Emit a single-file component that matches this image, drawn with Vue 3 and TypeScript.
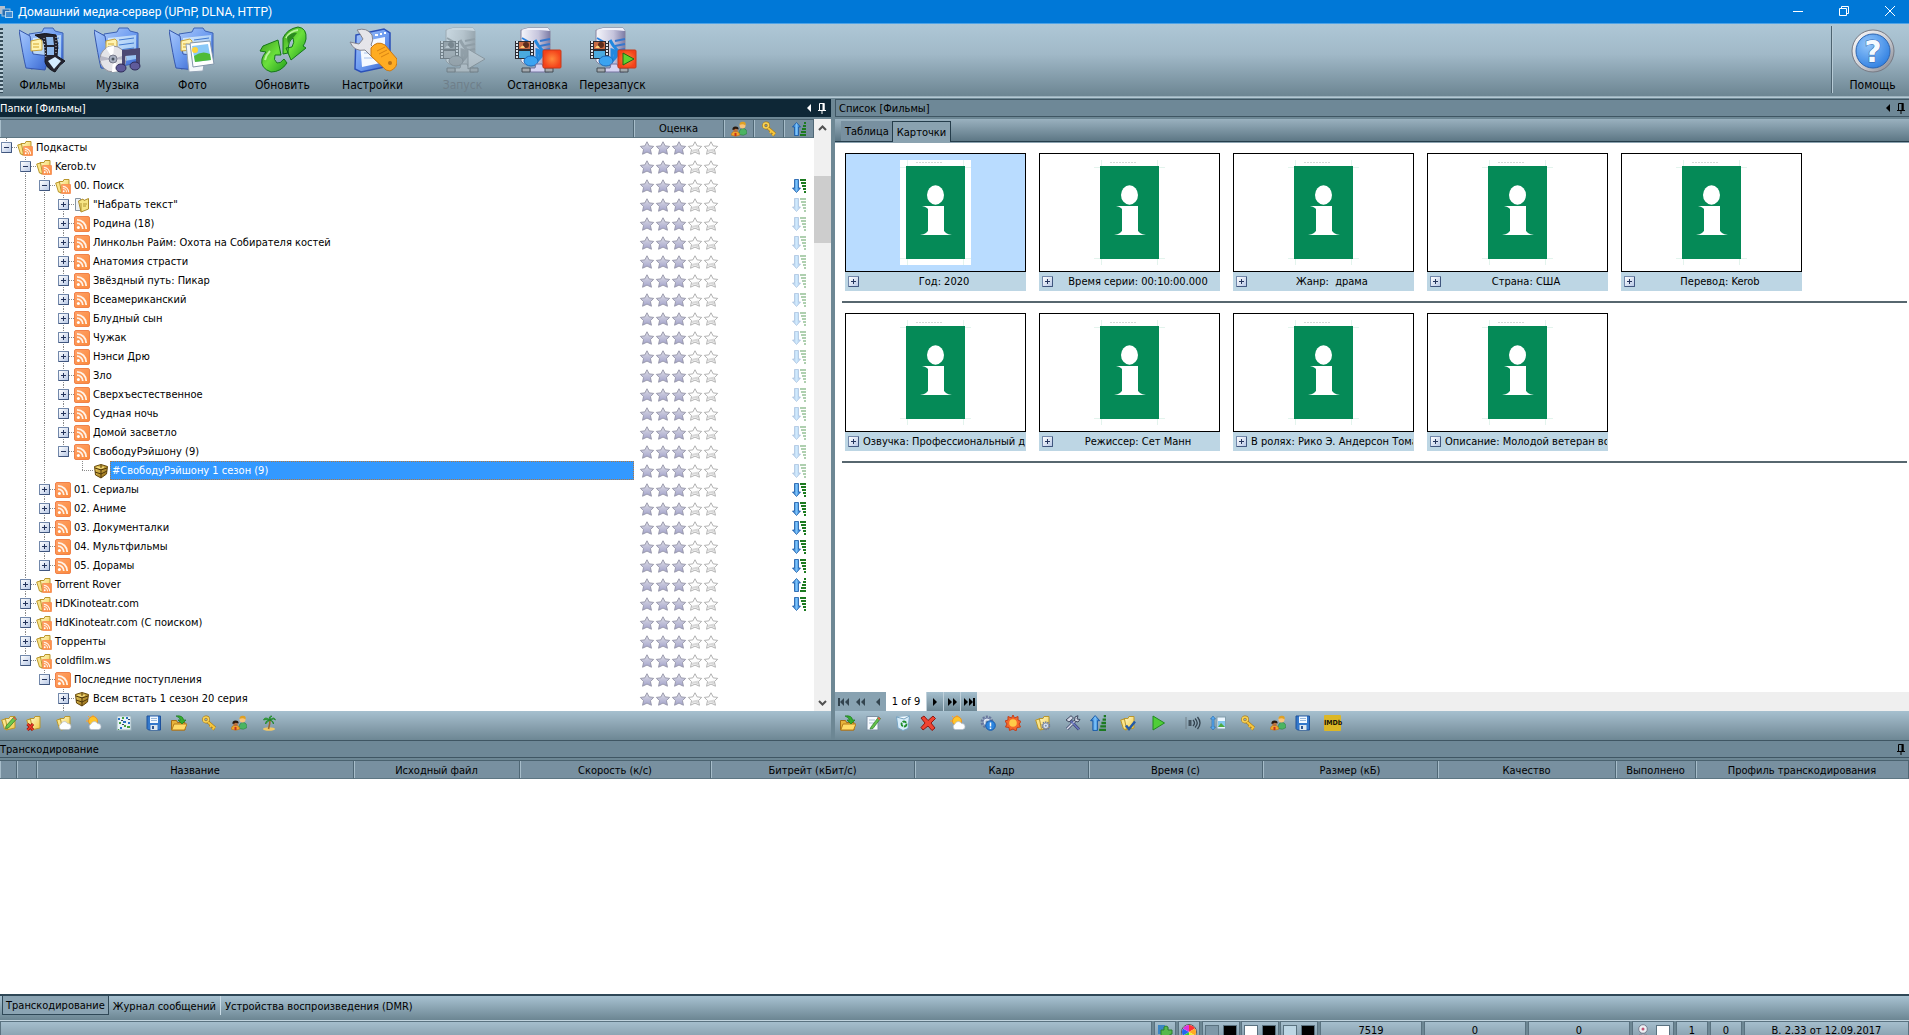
<script setup lang="ts">
import { computed, ref } from 'vue'

type Sort = '' | 'down' | 'faint' | 'up'
interface TreeRow {
  level: number
  icon: string
  label: string
  state: 'open' | 'closed' | 'leaf'
  sort: Sort
}

const row = (level: number, icon: string, label: string, state: TreeRow['state'] = 'closed', sort: Sort = ''): TreeRow =>
  ({ level, icon, label, state, sort })

const rows: TreeRow[] = [
  row(0, 'folder-rss', 'Подкасты', 'open'),
  row(1, 'folder-rss', 'Kerob.tv', 'open'),
  row(2, 'folder-rss', '00. Поиск', 'open', 'down'),
  row(3, 'folder-text', '"Набрать текст"', 'closed', 'faint'),
  row(3, 'rss', 'Родина (18)', 'closed', 'faint'),
  row(3, 'rss', 'Линкольн Райм: Охота на Собирателя костей', 'closed', 'faint'),
  row(3, 'rss', 'Анатомия страсти', 'closed', 'faint'),
  row(3, 'rss', 'Звёздный путь: Пикар', 'closed', 'faint'),
  row(3, 'rss', 'Всеамериканский', 'closed', 'faint'),
  row(3, 'rss', 'Блудный сын', 'closed', 'faint'),
  row(3, 'rss', 'Чужак', 'closed', 'faint'),
  row(3, 'rss', 'Нэнси Дрю', 'closed', 'faint'),
  row(3, 'rss', 'Зло', 'closed', 'faint'),
  row(3, 'rss', 'Сверхъестественное', 'closed', 'faint'),
  row(3, 'rss', 'Судная ночь', 'closed', 'faint'),
  row(3, 'rss', 'Домой засветло', 'closed', 'faint'),
  row(3, 'rss', 'СвободуРэйшону (9)', 'open', 'faint'),
  row(4, 'box', '#СвободуРэйшону 1 сезон (9)', 'leaf', 'faint'),
  row(2, 'rss', '01. Сериалы', 'closed', 'down'),
  row(2, 'rss', '02. Аниме', 'closed', 'down'),
  row(2, 'rss', '03. Документалки', 'closed', 'down'),
  row(2, 'rss', '04. Мультфильмы', 'closed', 'down'),
  row(2, 'rss', '05. Дорамы', 'closed', 'down'),
  row(1, 'folder-rss', 'Torrent Rover', 'closed', 'up'),
  row(1, 'folder-rss', 'HDKinoteatr.com', 'closed', 'down'),
  row(1, 'folder-rss', 'HdKinoteatr.com (С поиском)'),
  row(1, 'folder-rss', 'Торренты'),
  row(1, 'folder-rss', 'coldfilm.ws', 'open'),
  row(2, 'rss', 'Последние поступления', 'open'),
  row(3, 'box', 'Всем встать 1 сезон 20 серия'),
  row(3, 'box', ''),
]

const selected = ref(17)

// A branch line continues below a row when a later row sits on the same level
// before the tree returns to a shallower one.
const continues = (index: number, level: number): boolean => {
  for (let i = index + 1; i < rows.length; i++) {
    if (rows[i].level < level) return false
    if (rows[i].level === level) return true
  }
  return false
}

const tree = computed(() =>
  rows.map((r, i) => ({
    ...r,
    guides: Array.from({ length: r.level }, (_, l) => l > 0 && continues(i, l)),
    last: !continues(i, r.level),
  })),
)

const mainTools = [
  { icon: 'movies', label: 'Фильмы' },
  { icon: 'music', label: 'Музыка' },
  { icon: 'photo', label: 'Фото' },
  { icon: 'refresh', label: 'Обновить', gap: true },
  { icon: 'settings', label: 'Настройки', gap: true },
  { icon: 'start', label: 'Запуск', gap: true, disabled: true },
  { icon: 'stop', label: 'Остановка' },
  { icon: 'restart', label: 'Перезапуск' },
]

const folderTools = [['edit-folder', 'del-folder'], ['cloud-folder'], ['weather'], ['grid'], ['floppy', 'open'], ['key'], ['users'], ['palm']]
const listTools = [
  ['open', 'edit-page'], ['bin', 'cross'], ['weather'], ['gear-info', 'sun'], ['gear-folder'], ['tools', 'sort-up'],
  ['check-folder'], ['play'], [], ['sound', 'sort-image'], ['key'], ['users', 'floppy'],
]

const cards = [
  ['Год: 2020', 'Время серии: 00:10:00.000', 'Жанр:  драма', 'Страна: США', 'Перевод: Kerob'],
  ['Озвучка: Профессиональный дв', 'Режиссер: Сет Манн', 'В ролях: Рико Э. Андерсон Тома', 'Описание: Молодой ветеран во'],
]

const columns = [
  { label: '', width: 17 }, { label: '', width: 20 }, { label: 'Название', width: 317 },
  { label: 'Исходный файл', width: 166 }, { label: 'Скорость (к/с)', width: 191 },
  { label: 'Битрейт (кБит/с)', width: 204 }, { label: 'Кадр', width: 174 }, { label: 'Время (с)', width: 174 },
  { label: 'Размер (кБ)', width: 175 }, { label: 'Качество', width: 178 }, { label: 'Выполнено', width: 80 },
  { label: 'Профиль транскодирования', width: 213 },
]
</script>

<template>
  <div class="app">
    <svg class="sprite" aria-hidden="true">
      <defs>
        <linearGradient id="gBlue" x1="0" y1="0" x2="1" y2="1"><stop offset="0" stop-color="#a9c8fb" /><stop offset=".5" stop-color="#6f9df0" /><stop offset="1" stop-color="#3561cc" /></linearGradient>
        <linearGradient id="gPage" x1="0" y1="0" x2="1" y2="1"><stop offset="0" stop-color="#d8eafc" /><stop offset="1" stop-color="#8dbcf2" /></linearGradient>
        <linearGradient id="gGreen" x1="0" y1="0" x2="1" y2="1"><stop offset="0" stop-color="#3f9f20" /><stop offset=".5" stop-color="#6be03c" /><stop offset="1" stop-color="#1f9a1c" /></linearGradient>
        <linearGradient id="gOrange" x1="0" y1="0" x2="1" y2="1"><stop offset="0" stop-color="#ffa269" /><stop offset="1" stop-color="#fb8a3c" /></linearGradient>
        <linearGradient id="gYellow" x1="0" y1="0" x2="1" y2="1"><stop offset="0" stop-color="#fffbcf" /><stop offset="1" stop-color="#f0c63c" /></linearGradient>
        <linearGradient id="gServer" x1="0" y1="0" x2="1" y2="0"><stop offset="0" stop-color="#f6f6fb" /><stop offset=".6" stop-color="#c5c4dc" /><stop offset="1" stop-color="#7d7ca6" /></linearGradient>
        <linearGradient id="gStar" x1="0" y1="0" x2="0" y2="1"><stop offset="0" stop-color="#dedee6" /><stop offset="1" stop-color="#a3a3cb" /></linearGradient>
        <linearGradient id="gArrow" x1="0" y1="0" x2="1" y2="0"><stop offset="0" stop-color="#1c62b8" /><stop offset=".5" stop-color="#7cc4fb" /><stop offset="1" stop-color="#1d6cc8" /></linearGradient>
        <linearGradient id="gGold" x1="0" y1="0" x2="1" y2="1"><stop offset="0" stop-color="#f5d968" /><stop offset="1" stop-color="#8a5f0c" /></linearGradient>
        <linearGradient id="gRing" x1="0" y1="0" x2="1" y2="1"><stop offset="0" stop-color="#ffffff" /><stop offset=".6" stop-color="#c4c6cc" /><stop offset="1" stop-color="#7b7d88" /></linearGradient>
        <radialGradient id="gHelp" cx=".35" cy=".3" r=".8"><stop offset="0" stop-color="#92c6fb" /><stop offset="1" stop-color="#2b7ce0" /></radialGradient>
        <radialGradient id="gStop"><stop offset="0" stop-color="#ff8a3c" /><stop offset="1" stop-color="#f4421a" /></radialGradient>
      </defs>

      <symbol id="bigfolder" viewBox="0 0 48 48">
        <path d="M10 8 L23 6 L25 2 H34 L36 5 L44 7 V37 L12 43 Z" fill="url(#gBlue)" stroke="#3c62b4" />
        <path d="M14 12 L42 9 V33 L14 38 Z" fill="url(#gPage)" />
        <path d="M25 14 l15 -2 M25 19 l15 -2 M25 24 l15 -2" stroke="#3f78cf" fill="none" />
        <path d="M0 4 L11 10 L14 28 L30 30 L26 44 L7 42 Q4 30 0 4Z" fill="url(#gBlue)" stroke="#3657ac" />
        <path d="M12 15 l9 -2 2 2 v9 l-11 1z" fill="#fff3b0" stroke="#c8a33c" />
        <path d="M14 18 h6 M14 21 h6" stroke="#d3a72e" />
      </symbol>
      <symbol id="movies" viewBox="0 0 48 48">
        <use href="#bigfolder" />
        <path d="M16 9 Q26 6 37 9 Q40 20 38 30 L46 35 Q40 39 36 46 Q28 43 26 36 Q27 22 24 14 Z" fill="#24242f" stroke="#15151c" />
        <path d="M27 11 h7 l1 8 h-7z M28 21 h7 v8 h-7z" fill="#8fb9ec" />
        <path d="M29 35 L36 31 L42 35 L35 43Z" fill="#d4ecff" />
        <path d="M25 12 L27 33 M37 11 V29" fill="none" stroke="#c3c9d6" stroke-dasharray="1 2" />
      </symbol>
      <symbol id="music" viewBox="0 0 48 48">
        <use href="#bigfolder" />
        <circle cx="19" cy="33" r="13" fill="#e4e4e8" stroke="#92929c" />
        <path d="M19 33 L12 22 A13 13 0 0 1 20 20Z M19 33 L26 44 A13 13 0 0 1 18 46Z" fill="#fff" />
        <path d="M19 33 L31 29 A13 13 0 0 1 32 34Z M19 33 L7 30 A13 13 0 0 0 6 35Z" fill="#b9b9c6" />
        <circle cx="19" cy="33" r="4" fill="#aab2c2" stroke="#76798a" /><circle cx="19" cy="33" r="1.5" fill="#48525f" />
        <path d="M28 24 L46 22 V40 H42 V29 L31 30 V43 H28Z" fill="#4b4873" />
        <ellipse cx="27" cy="42" rx="5" ry="4" fill="#5f5b9a" stroke="#2e2b58" /><ellipse cx="41" cy="40" rx="5" ry="4" fill="#5f5b9a" stroke="#2e2b58" />
      </symbol>
      <symbol id="photo" viewBox="0 0 48 48">
        <use href="#bigfolder" />
        <path d="M17 18 L38 20 L34 45 L20 46 Z" fill="#f3f7fa" stroke="#91a2b4" />
        <path d="M21 17 L41 15 L45 38 L24 41 Z" fill="#fff" stroke="#8396ab" />
        <path d="M23 20 L39 18 L42 34 L26 36 Z" fill="#8ac9f8" />
        <path d="M25 30 Q33 24 41 28 L42 34 L26 36 Z" fill="#4fbb38" /><circle cx="26" cy="24" r="3" fill="#ffd33b" />
      </symbol>
      <symbol id="refresh" viewBox="0 0 48 48">
        <path d="M24 28 L24 12 Q28 3 39 1 Q48 2 47 13 Q46 18 44 20 L47 22 L32 34 L27 22 L33 21 Q36 16 34 12 Q29 14 29 27Z" fill="url(#gGreen)" stroke="#157818" />
        <path d="M4 20 L19 14 L22 29 L16 29 Q14 34 18 37 Q21 38 25 33 L28 37 Q22 46 12 46 Q1 42 3 33 Q4 29 7 26 L1 25Z" fill="url(#gGreen)" stroke="#157818" />
        <path d="M27 12 Q31 5 39 4 M6 34 Q7 29 11 25" stroke="#b7f59a" fill="none" stroke-width="2" />
        <path d="M28 11 Q33 6 38 7 L34 12 Q31 13 29 18Z" fill="#2b8c1e" />
      </symbol>
      <symbol id="settings" viewBox="0 0 48 48">
        <path d="M7 9 L35 3 L41 7 V40 L12 46 L6 43Z" fill="url(#gBlue)" stroke="#2b50b8" stroke-width="1.5" />
        <path d="M11 16 L36 11 V36 L13 41Z" fill="#f5f9ff" /><path d="M26 9 h3 M31 8 h2 M35 7 h2" stroke="#fff" stroke-width="2" />
        <path d="M15 22 h17 M15 27 h15 M15 32 h15" stroke="#a9c3eb" />
        <path d="M8 4 Q18 1 23 9 Q25 14 22 19 L29 26 L24 32 L16 24 Q5 26 1 16 L10 18 L14 13 L11 8Z" fill="#e5e5ea" stroke="#83848e" />
        <path d="M22 22 Q28 14 36 19 L48 33 Q49 42 41 45 L37 44 L22 30Z" fill="#ffac22" stroke="#ca7713" />
        <path d="M28 25 l8 -4 M30 28 l8 -4 M32 31 l8 -4" stroke="#d88312" /><circle cx="41" cy="37" r="2" fill="#b97116" />
      </symbol>
      <symbol id="server" viewBox="0 0 48 48">
        <path d="M7 4 L14 2 H34 L36 5 V38 L30 41 L10 38 L7 35Z" fill="url(#gServer)" stroke="#86849f" />
        <path d="M7 4 H26 L36 5 L34 2 H14Z" fill="#f1f1fa" />
        <path d="M26 15 L36 13 M26 20 L36 18 M26 25 L36 23" stroke="#3577cd" stroke-width="2" /><path d="M8 12 l7 4" stroke="#2e83df" stroke-width="2" />
        <rect x="1" y="15" width="19" height="18" fill="#2b2b33" /><path d="M3 15 v18 M18 15 v18" stroke="#dfe7ee" stroke-width="2" stroke-dasharray="2 1" />
        <rect x="5" y="16" width="11" height="7" fill="#c86a43" /><rect x="5" y="25" width="11" height="7" fill="#4aaadf" /><circle cx="12" cy="19" r="3" fill="#5c2d1d" /><path d="M6 22 q3 -5 5 0" fill="#ffcf78" />
        <path d="M21 14 Q24 20 28 24 Q29 29 26 32 Q27 25 23 24 V35" fill="none" stroke="#2288df" stroke-width="3" />
        <ellipse cx="17" cy="35" rx="7" ry="5" fill="#3ba3f1" stroke="#1c6bbd" />
        <path d="M22 38 h6 l2 4 h5 v4 H16 v-4 h5z" fill="#d6d4f2" stroke="#7472a0" /><path d="M8 42 h8 v4 H8z M31 42 h8 v4 h-8z" fill="#a5a9ad" stroke="#444c54" />
      </symbol>
      <symbol id="start" viewBox="0 0 48 48"><use href="#server" /><path d="M29 23 L46 33 L29 43Z" fill="#cfd8e0" stroke="#646b73" /></symbol>
      <symbol id="stop" viewBox="0 0 48 48"><use href="#server" /><rect x="29" y="24" width="18" height="18" rx="1" fill="url(#gStop)" stroke="#c73b1a" /></symbol>
      <symbol id="restart" viewBox="0 0 48 48"><use href="#server" /><rect x="29" y="24" width="18" height="18" rx="1" fill="url(#gStop)" stroke="#c73b1a" /><path d="M34 27 L45 33 L34 39Z" fill="#5fd22e" stroke="#1c6b14" /></symbol>
      <symbol id="logo" viewBox="0 0 16 16"><path d="M0 2 h7 v8 H0z" fill="#b5bfcb" /><rect x="4" y="5" width="8" height="7" fill="#2b6cae" stroke="#9cc3e6" /><rect x="7.500" y="7.500" width="7" height="6" fill="#3f8bd2" stroke="#b4d4ec" /></symbol>

      <symbol id="folder" viewBox="0 0 16 16">
        <path d="M4 3.5 H8 L9 1.5 H14 V13 L5 15Z" fill="url(#gYellow)" stroke="#b9962c" /><path d="M.7 5 L4.5 4 L6.5 14.5 L3.5 14Z" fill="#fbe58a" stroke="#b9962c" />
      </symbol>
      <symbol id="rss" viewBox="0 0 16 16">
        <rect x=".5" y=".5" width="15" height="15" rx="1.5" fill="url(#gOrange)" stroke="#f0824a" />
        <circle cx="4.4" cy="11.6" r="1.5" fill="#fff" /><path d="M3 7.2 A5.8 5.8 0 0 1 8.8 13 M3 3.8 A9.2 9.2 0 0 1 12.2 13" fill="none" stroke="#fff3e8" stroke-width="1.8" />
      </symbol>
      <symbol id="folder-rss" viewBox="0 0 16 16"><use href="#folder" /><use href="#rss" x="6" y="6" width="10" height="10" /></symbol>
      <symbol id="folder-text" viewBox="0 0 16 16"><path d="M1.500 1.500 h5 v12 h-5z" fill="#eef2f7" stroke="#8693a0" /><path d="M4.500 4 L9 2 l1 1.500 L14.500 1.500 V12 L7 15Z" fill="#f7e584" stroke="#ac8b2c" /><path d="M7 6 v8 M9 7 h4 M9 9 h3" stroke="#b3952f" /></symbol>
      <symbol id="box" viewBox="0 0 16 16"><path d="M1.500 3.500 L8 1.500 L14.500 3.500 L13.500 11 L8 15 L2.500 12Z" fill="url(#gGold)" stroke="#66480b" /><path d="M8 2 V15 M2 5 L8 7 L14 5 M2 9 L8 11 L14 8" stroke="#50370a" fill="none" /><path d="M4 4 L8 5.500 L11 4" stroke="#ffe98c" fill="none" /></symbol>
      <symbol id="edit-folder" viewBox="0 0 16 16"><use href="#folder" /><path d="M5 11 L13 2 L15.500 4 L7.500 13 L4.500 13.500Z" fill="#6bc94c" stroke="#2d6e24" stroke-width=".7" /><path d="M13 2 l2.500 2 -1 1 -2.500-2z" fill="#ef5546" /></symbol>
      <symbol id="del-folder" viewBox="0 0 16 16"><use href="#folder" /><path d="M1.500 9 L7 15 M7 9 L1.500 15" stroke="#8f120d" stroke-width="3" /><path d="M1.500 9 L7 15 M7 9 L1.500 15" stroke="#ee3b28" stroke-width="1.500" /></symbol>
      <symbol id="cloud" viewBox="0 0 16 16"><path d="M5 14.500 a3 3 0 0 1 0-5.500 a3.500 3.500 0 0 1 6.500-.5 a3 3 0 0 1 1 6z" fill="#fcfeff" stroke="#b3bcc8" stroke-width=".7" /></symbol>
      <symbol id="cloud-folder" viewBox="0 0 16 16"><use href="#folder" /><use href="#cloud" /></symbol>
      <symbol id="weather" viewBox="0 0 16 16"><circle cx="7" cy="6" r="4.500" fill="#ffc52a" stroke="#ee9420" /><path d="M0 6 h2 M7 0 v1.500 M2 1 l1.500 1.500" stroke="#ffa627" /><use href="#cloud" /></symbol>
      <symbol id="grid" viewBox="0 0 16 16"><rect x="1" y="1" width="14" height="14" fill="#e8f2f8" stroke="#9bb3bd" /><path d="M2 3h2v2H2zM10 2h2v2h-2zM7 6h3v2H7zM4 12h2v2H4zM12 7h2v2h-2z" fill="#2671c4" /><path d="M6 2h2v2H6zM3 7h2v2H3zM11 11h3v2h-3zM8 10h2v2H8zM2 14h1v1H2z" fill="#45a43e" /><path d="M5 5h2v1H5zM12 4h2v1h-2zM6 9h2v1H6z" fill="#33445c" /></symbol>
      <symbol id="floppy" viewBox="0 0 16 16"><path d="M1 1 h13.500 v14 H2.500 L1 13.500Z" fill="#3478cb" stroke="#1d509b" /><rect x="4" y="1.500" width="8" height="6.500" fill="#f3f9ff" /><path d="M5 3.500h6M5 5.500h6" stroke="#96b6da" /><rect x="4.500" y="10" width="7" height="5" fill="#dce6ef" /><rect x="6" y="11" width="2" height="3" fill="#2d5793" /></symbol>
      <symbol id="open" viewBox="0 0 16 16"><path d="M.5 5.500 h5 l1 2 H14 V15 H.5Z" fill="#e8b33b" stroke="#a36d16" /><path d="M3 9 H16 L13.500 15 H.8Z" fill="#ffdb68" stroke="#b47b1a" /><path d="M5 1 Q12 0 12.500 5 h2.500 L11 9 L7 5 h2.500 Q9 2.500 5 1Z" fill="#36ac2e" stroke="#197b1c" stroke-width=".7" /></symbol>
      <symbol id="key" viewBox="0 0 16 16"><circle cx="5" cy="4.500" r="2.500" fill="none" stroke="#a97b16" stroke-width="2.800" /><circle cx="5" cy="4.500" r="2.500" fill="none" stroke="#f9d458" stroke-width="1.600" /><path d="M7 7 L14 13 M10.500 10 L9 12 M13 12.500 L11.500 14.500" stroke="#a97b16" stroke-width="3" /><path d="M7 7 L14 13 M10.500 10 L9 12 M13 12.500 L11.500 14.500" stroke="#f6c63d" stroke-width="2" /></symbol>
      <symbol id="users" viewBox="0 0 16 16"><path d="M8 13.500 q0-6 4-6 t4 5 q-3 3-8 1z" fill="#4bb462" stroke="#27733a" stroke-width=".5" /><circle cx="11.500" cy="4.500" r="3" fill="#f9c47b" /><path d="M8.500 4 Q8.500.5 12 .7 T14.500 4.500 Q12 2.500 8.500 4Z" fill="#dfa024" /><path d="M0 14 q1-4 4.500-4 t4.500 4 q-4.500 2.500-9 0z" fill="#f0a52d" stroke="#a8661a" stroke-width=".5" /><circle cx="4.500" cy="9" r="2.300" fill="#b9713f" /><path d="M1.500 9 Q1 5.500 4.500 5.500 T7.500 8.500 Q4 7 3.500 8.500Z" fill="#27180f" /><path d="M4.500 12 v3" stroke="#c63020" stroke-width="2" /></symbol>
      <symbol id="palm" viewBox="0 0 16 16"><ellipse cx="8" cy="14" rx="6" ry="1.800" fill="#f1c765" /><path d="M9 5 Q9 9 7.500 14" stroke="#9b682c" stroke-width="1.600" fill="none" /><path d="M9 5 Q4 1 2.500 5 Q5 4 8 5 Q4 6 4.500 9 Q7 6 9 5 Q12 6 12.500 9 Q13 6 9 5 Q13 3 14.500 5 Q13 1 9 5 Q9 2 11 1 Q7 1 9 5Z" fill="#3eb43c" stroke="#1d8428" stroke-width=".8" /></symbol>
      <symbol id="edit-page" viewBox="0 0 16 16"><rect x="2" y="1.500" width="11" height="13.500" fill="#f7fbff" stroke="#7f92a5" /><path d="M4 5h6M4 8h5" stroke="#acbdd0" /><path d="M6 12 L13.500 2 L15.500 3.500 L8 13.500 L5 14Z" fill="#63c048" stroke="#2c7c2b" stroke-width=".7" /><path d="M13.500 2 l2 1.500 -1 1.500 -2-1.500z" fill="#ed594a" /></symbol>
      <symbol id="bin" viewBox="0 0 16 16"><path d="M1.500 2 L14.500 1 L13 13.500 L8 15.500 L3 13Z" fill="#d6edfa" stroke="#77a5c5" /><path d="M1.500 2 L9 4 L14.500 1" fill="#f7fdff" stroke="#78a3bf" /><circle cx="9" cy="9" r="2.500" fill="none" stroke="#1f8f2c" stroke-width="1.800" stroke-dasharray="4 1" /></symbol>
      <symbol id="cross" viewBox="0 0 16 16"><path d="M1 3 L4 1 L8 5.500 L13 1 L15.500 3.500 L11 8 L15 13 L12 15.500 L8 11 L3 15 L1 12.500 L5 8Z" fill="#f04431" stroke="#8d1912" /></symbol>
      <symbol id="gear" viewBox="0 0 16 16"><circle cx="7" cy="7" r="5.200" fill="none" stroke="#68769d" stroke-width="2.500" stroke-dasharray="2 1.250" /><circle cx="7" cy="7" r="4" fill="#dce4f2" stroke="#6f80a8" /><circle cx="7" cy="7" r="1.500" fill="#7d92a9" /></symbol>
      <symbol id="gear-info" viewBox="0 0 16 16"><use href="#gear" /><circle cx="10.500" cy="10.500" r="4.800" fill="#2d85df" stroke="#195baa" /><path d="M10.500 7.500 v4 M10.500 12.500 v1.500" stroke="#fff" stroke-width="1.500" /></symbol>
      <symbol id="sun" viewBox="0 0 16 16"><path d="M8 0 L9.500 3 L13 1.500 L13 5 L16 6.500 L14 9 L15.500 12 L12 12.500 L11 16 L8 14 L4.500 15.500 L4 12.500 L.5 12 L2 9 L0 6 L3 5 L3 1.500 L6.500 3Z" fill="#f5682b" stroke="#c63e19" /><circle cx="8" cy="8" r="3.800" fill="#ffcb48" /></symbol>
      <symbol id="gear-folder" viewBox="0 0 16 16"><use href="#folder" /><use href="#gear" x="6" y="6" width="11" height="11" /></symbol>
      <symbol id="tools" viewBox="0 0 16 16"><path d="M2 14 L11 5 M5 5 L14 14.500" stroke="#424b74" stroke-width="3" /><path d="M2 14 L11 5" stroke="#dce0ea" stroke-width="1.500" /><path d="M5 5 L14 14.500" stroke="#6976c1" stroke-width="1.500" /><path d="M1 5 L6 .7 L8.500 3 L4 7Z M10 2 L13 .7 L12 4 L15 4.500 L13 7 L9.500 6Z" fill="#d0d7e5" stroke="#414a61" /></symbol>
      <symbol id="sort-up" viewBox="0 0 14 14"><path d="M4.500 .5 L8.500 5 H6.500 V13.500 H2.500 V5 H.5Z" fill="url(#gArrow)" stroke="#1558a6" stroke-width=".8" /><path d="M12 1h2M11 4h3M10 7h4M9 10h5M8 13h6" stroke="#1c7a20" stroke-width="2" /></symbol>
      <symbol id="sort-down" viewBox="0 0 14 14"><path d="M4.500 13.500 L8.500 9 H6.500 V.5 H2.500 V9 H.5Z" fill="url(#gArrow)" stroke="#1558a6" stroke-width=".8" /><path d="M8 1h6M9 4h5M10 7h4M11 10h3M12 13h2" stroke="#1c7a20" stroke-width="2" /></symbol>
      <symbol id="check-folder" viewBox="0 0 16 16"><use href="#folder" /><path d="M6 10.500 L9 14 L15 6.500" stroke="#245aa7" stroke-width="2.500" fill="none" /></symbol>
      <symbol id="play" viewBox="0 0 16 16"><path d="M3 1 L14.500 8 L3 15Z" fill="#4fce38" stroke="#218a20" /></symbol>
      <symbol id="sound" viewBox="0 0 16 16"><path d="M1 2v12" stroke="#71808a" /><path d="M5 5 v6" stroke="#42525e" stroke-width="3" /><path d="M8 5 q3 3 0 6 M10 3.500 q4.500 4.500 0 9 M12.500 2 q5 6 0 12" fill="none" stroke="#33434f" stroke-width="1.300" /></symbol>
      <symbol id="sort-image" viewBox="0 0 16 16"><path d="M3 1 L5.500 4 H4 V12 H5.500 L3 15 L.5 12 H2 V4 H.5Z" fill="#5aa9ee" stroke="#2369ad" stroke-width=".6" /><rect x="7" y="2" width="8.500" height="12" fill="#eaf6ff" stroke="#829eac" /><rect x="8" y="6" width="7" height="6" fill="#82c7ee" /><path d="M8 12 l3-4 4 4z" fill="#4daa3f" /></symbol>
      <symbol id="puzzle" viewBox="0 0 16 16"><path d="M1 1 h7 v9 H1z" fill="#3b85c4" /><path d="M4 6 h3 q-1-4 2-4 t2 4 h4 v4 q-3 0-3 2 t3 1 v4 H4z" fill="#57b84b" stroke="#2c7e2c" /></symbol>
      <symbol id="wheel" viewBox="0 0 16 16"><circle cx="8" cy="8" r="7.500" fill="#fff" stroke="#555" /><path d="M8 8 V1 A7 7 0 0 1 14 4.500Z" fill="#f33" /><path d="M8 8 L14 4.500 A7 7 0 0 1 14 11.500Z" fill="#fa2" /><path d="M8 8 L14 11.500 A7 7 0 0 1 8 15Z" fill="#ee3" /><path d="M8 8 V15 A7 7 0 0 1 2 11.500Z" fill="#3c4" /><path d="M8 8 L2 11.500 A7 7 0 0 1 2 4.500Z" fill="#26e" /><path d="M8 8 L2 4.500 A7 7 0 0 1 8 1Z" fill="#d3d" /></symbol>
      <symbol id="person" viewBox="0 0 16 16"><circle cx="7" cy="5" r="4.300" fill="#eef0f4" stroke="#777f90" /><path d="M1 16 q0-6 6-6 t6 6z" fill="#e3e6ec" stroke="#777f90" /><circle cx="7" cy="5" r="1.500" fill="#c25577" /></symbol>
      <symbol id="star" viewBox="-1 -1 18 18"><path d="M8 1 L10.400 5.600 L15.500 6.200 L11.900 9.800 L13 15 L8 12.600 L3 15 L4.100 9.800 L.5 6.200 L5.600 5.600Z" fill="url(#gStar)" stroke="#9393a6" stroke-linejoin="round" /></symbol>
      <symbol id="star-off" viewBox="-1 -1 18 18"><path d="M8 1 L10.400 5.600 L15.500 6.200 L11.900 9.800 L13 15 L8 12.600 L3 15 L4.100 9.800 L.5 6.200 L5.600 5.600Z" fill="#fdfdfd" stroke="#a8a8a8" stroke-linejoin="round" /><path d="M5 10 L12 8.500 L11 10 L12 13.500 L8 11.500 L4.500 13Z" fill="#d8d8d8" /></symbol>
      <symbol id="plus" viewBox="0 0 9 9"><path d="M2 4.500h5M4.500 2v5" stroke="#24345c" /></symbol>
      <symbol id="minus" viewBox="0 0 9 9"><path d="M2 4.500h5" stroke="#24345c" /></symbol>
      <symbol id="pin" viewBox="0 0 10 12"><path d="M2.500 8 V1.500 H7 V8 M1 8.500 H9 M5 8.500 V12" fill="none" stroke="currentColor" /><path d="M6.500 1 v7" stroke="currentColor" stroke-width="2" /></symbol>
      <symbol id="left" viewBox="0 0 10 12"><path d="M7 2 V10 L3 6Z" fill="currentColor" /></symbol>
      <symbol id="info-card" viewBox="0 0 71 105">
        <rect width="71" height="105" fill="#fff" />
        <path d="M0 7.500H71M0 98.500H71M7.500 0V105M63.500 0V105" stroke="#e3f4ed" />
        <rect x="6" y="6" width="59" height="93" fill="#058a57" /><path d="M16 2.500 h26" stroke="#d5dad8" stroke-dasharray="2 1" />
        <ellipse cx="35.500" cy="35" rx="8.500" ry="9.700" fill="#fff" /><rect x="28" y="46" width="16" height="28" fill="#fff" />
        <path d="M22 46 H30 V52 Q28 47 22 46Z M20 75 Q28 74 29 68 H43 Q44 74 52 75Z" fill="#fff" />
      </symbol>
    </svg>

    <header class="titlebar">
      <svg class="i16"><use href="#logo" /></svg>
      <h1>Домашний медиа-сервер (UPnP, DLNA, HTTP)</h1>
      <div class="winbtns">
        <button aria-label="Свернуть"><svg width="12" height="12"><path d="M1 6.500h10" stroke="#fff" /></svg></button>
        <button aria-label="Восстановить"><svg width="12" height="12"><path d="M1.500 3.500h7v7h-7zM3.500 3V1.500h7v7H9" fill="none" stroke="#fff" /></svg></button>
        <button aria-label="Закрыть"><svg width="12" height="12"><path d="M1 1l10 10M11 1L1 11" stroke="#fff" /></svg></button>
      </div>
    </header>

    <nav class="toolbar">
      <span class="grip"></span>
      <button v-for="t in mainTools" :key="t.icon" :class="{ gap: t.gap }" :disabled="t.disabled">
        <svg class="i48"><use :href="'#' + t.icon" /></svg>{{ t.label }}
      </button>
      <button class="help">
        <svg class="i48" viewBox="0 0 48 48">
          <circle cx="24" cy="25" r="21" fill="url(#gRing)" stroke="#777a84" /><circle cx="24" cy="25" r="17" fill="url(#gHelp)" stroke="#2c65b0" />
          <text x="24" y="36" text-anchor="middle" font-family="DejaVu Sans, sans-serif" font-weight="bold" font-size="30" fill="#f5faff" stroke="#2c62ad" stroke-width="1" paint-order="stroke">?</text>
        </svg>Помощь
      </button>
    </nav>

    <main class="panes">
      <section class="pane folders">
        <header class="panehead active">
          <h2>Папки [Фильмы]</h2>
          <button aria-label="Свернуть панель"><svg><use href="#left" /></svg></button>
          <button aria-label="Закрепить"><svg><use href="#pin" /></svg></button>
        </header>
        <div class="treewrap">
          <div class="treeclip">
            <table class="tree">
              <colgroup><col /><col class="c-rate" /><col class="c-ico" /><col class="c-ico" /><col class="c-ico" /></colgroup>
              <thead>
                <tr>
                  <th></th><th>Оценка</th>
                  <th><svg class="i16"><use href="#users" /></svg></th>
                  <th><svg class="i16"><use href="#key" /></svg></th>
                  <th><svg class="i14"><use href="#sort-up" /></svg></th>
                </tr>
              </thead>
              <tbody>
                <tr v-for="(r, i) in tree" :key="i" @click="selected = i">
                  <td>
                    <div class="node">
                      <span v-for="(g, l) in r.guides" :key="l" class="guide" :class="{ line: g }"></span>
                      <span class="slot" :class="{ last: r.last }">
                        <button v-if="r.state !== 'leaf'" class="exp" :aria-label="r.state === 'open' ? 'Свернуть' : 'Развернуть'">
                          <svg><use :href="r.state === 'open' ? '#minus' : '#plus'" /></svg>
                        </button>
                      </span>
                      <svg class="i16"><use :href="'#' + r.icon" /></svg>
                      <span class="label" :class="{ selected: i === selected }">{{ r.label }}</span>
                    </div>
                  </td>
                  <td><div class="stars"><svg v-for="n in 5" :key="n" class="i16"><use :href="n < 4 ? '#star' : '#star-off'" /></svg></div></td>
                  <td></td><td></td>
                  <td>
                    <svg v-if="r.sort" class="i14" :class="{ faint: r.sort === 'faint' }"><use :href="r.sort === 'up' ? '#sort-up' : '#sort-down'" /></svg>
                  </td>
                </tr>
              </tbody>
            </table>
          </div>
          <div class="scroll">
            <button aria-label="Вверх"><svg width="9" height="6"><path d="M1 5l3.500-3.500L8 5" fill="none" stroke="#505050" stroke-width="2" /></svg></button>
            <div class="thumb"></div>
            <button aria-label="Вниз"><svg width="9" height="6"><path d="M1 1l3.500 3.500L8 1" fill="none" stroke="#505050" stroke-width="2" /></svg></button>
          </div>
        </div>
        <div class="tools">
          <span v-for="(g, i) in folderTools" :key="i" class="group">
            <button v-for="n in g" :key="n" :aria-label="n"><svg class="i16"><use :href="'#' + n" /></svg></button>
          </span>
        </div>
      </section>

      <section class="pane list">
        <header class="panehead">
          <h2>Список [Фильмы]</h2>
          <button aria-label="Свернуть панель"><svg><use href="#left" /></svg></button>
          <button aria-label="Закрепить"><svg><use href="#pin" /></svg></button>
        </header>
        <div class="tabs"><button>Таблица</button><button class="on">Карточки</button></div>
        <div class="cards">
          <div v-for="(line, r) in cards" :key="r" class="cardrow">
            <article v-for="(c, i) in line" :key="c" class="card" :class="{ on: r === 0 && i === 0 }">
              <div class="thumbnail"><svg width="71" height="105"><use href="#info-card" /></svg></div>
              <footer><button class="exp" aria-label="Развернуть"><svg><use href="#plus" /></svg></button><span>{{ c }}</span></footer>
            </article>
          </div>
        </div>
        <div class="pager">
          <button disabled aria-label="Первая"><svg width="11" height="10"><path d="M1 1v8" stroke="#33444f" stroke-width="2" /><path d="M6 1v8L2 5zM11 1v8L7 5z" fill="#33444f" /></svg></button>
          <button disabled aria-label="Назад на страницу"><svg width="11" height="10"><path d="M5 1v8L1 5zM10 1v8L6 5z" fill="#33444f" /></svg></button>
          <button disabled aria-label="Назад"><svg width="11" height="10"><path d="M8 1v8L4 5z" fill="#33444f" /></svg></button>
          <span>1 of 9</span>
          <button aria-label="Вперёд"><svg width="11" height="10"><path d="M3 1v8l4-4z" /></svg></button>
          <button aria-label="Вперёд на страницу"><svg width="11" height="10"><path d="M1 1v8l4-4zM6 1v8l4-4z" /></svg></button>
          <button aria-label="Последняя"><svg width="11" height="10"><path d="M0 1v8l4-4zM5 1v8l4-4z" /><path d="M10 1v8" stroke="#000" stroke-width="2" /></svg></button>
        </div>
        <div class="tools">
          <span v-for="(g, i) in listTools" :key="i" class="group">
            <button v-for="n in g" :key="n" :aria-label="n"><svg class="i16"><use :href="'#' + n" /></svg></button>
          </span>
          <span class="group"><button><b class="imdb">IMDb</b></button></span>
        </div>
      </section>
    </main>

    <section class="transcode">
      <header class="panehead">
        <h2>Транскодирование</h2>
        <button aria-label="Закрепить"><svg><use href="#pin" /></svg></button>
      </header>
      <table class="jobs">
        <colgroup><col v-for="(c, i) in columns" :key="i" :style="{ width: c.width + 'px' }" /></colgroup>
        <thead><tr><th v-for="(c, i) in columns" :key="i">{{ c.label }}</th></tr></thead>
      </table>
      <div class="empty"></div>
      <div class="bottomtabs">
        <button class="on">Транскодирование</button><button>Журнал сообщений</button><button>Устройства воспроизведения (DMR)</button>
      </div>
    </section>

    <footer class="status">
      <span class="cell fill"></span>
      <span class="cell ico"><svg class="i16"><use href="#puzzle" /></svg></span>
      <span class="cell ico"><svg class="i16"><use href="#wheel" /></svg></span>
      <span class="swatches">
        <span class="cell pair"><i class="grey"></i><i class="black"></i></span>
        <span class="cell pair"><i class="white"></i><i class="black"></i></span>
        <span class="cell pair"><i class="pale"></i><i class="black"></i></span>
      </span>
      <span class="cell num">7519</span><span class="cell num">0</span><span class="cell num">0</span>
      <span class="cell user"><svg class="i16"><use href="#person" /></svg><i class="white"></i></span>
      <span class="cell small">1</span><span class="cell small">0</span>
      <span class="cell version">В. 2.33 от 12.09.2017</span>
    </footer>
  </div>
</template>

<style>
body { margin: 0; overflow: hidden; }
</style>

<style scoped>
.app {
  display: flex;
  flex-direction: column;
  height: 100vh;
  overflow: hidden;
  background: #6d8794;
  color: #000;
  font: 11px/14px "DejaVu Sans Condensed", "Noto Sans", sans-serif;
}
.app *, .app *::before { box-sizing: border-box; }
.sprite { position: absolute; width: 0; height: 0; }
button { margin: 0; padding: 0; border: 0; background: none; color: inherit; font: inherit; }
svg { display: block; flex: none; }
h1, h2 { margin: 0; font: inherit; flex: 1; }
h2 { padding-top: 2px; }
th { font-weight: normal; }
.i14 { width: 14px; height: 14px; margin: 0 auto; }
.i16 { width: 16px; height: 16px; }
.i48 { width: 48px; height: 48px; }

.titlebar { flex: none; display: flex; align-items: center; gap: 4px; height: 24px; overflow: hidden; background: #0078d7; border-bottom: 1px solid #4fa3e6; color: #fff; }
.titlebar .i16 { margin-left: -2px; }
.titlebar h1 { font: 12px/22px Roboto, "Noto Sans", sans-serif; }
.winbtns { display: flex; margin-right: -4px; }
.winbtns button { display: flex; justify-content: center; width: 46px; }
.winbtns svg { margin-bottom: 2px; }

.toolbar { flex: none; display: flex; height: 75px; padding: 2px 0 0 0; background: linear-gradient(#aec7d6, #a1b9c8 40%, #6c8592 96%, #b5c9d4 97%, #b5c9d4 98%, #6d8794 99%); }
.grip { width: 3px; margin: 2px 2px 6px 0; background: repeating-linear-gradient(#364c59 0 2px, #b9ced9 2px 4px); }
.toolbar button { width: 75px; display: flex; flex-direction: column; align-items: center; font-size: 12px; line-height: 22px; white-space: nowrap; }
.toolbar button.gap { margin-left: 15px; }
.toolbar button:disabled { color: #6f7f8a; }
.toolbar button:disabled svg { filter: grayscale(1); opacity: .4; }
.toolbar .help { margin-left: auto; width: 78px; padding-left: 4px; margin-bottom: 6px; border-left: 1px solid #4d6370; box-shadow: inset 1px 0 #b7cbd6; }

.panes { flex: 641 1 0; min-height: 0; display: flex; gap: 4px; }
.pane { display: flex; flex-direction: column; min-width: 0; min-height: 0; }
.folders { flex: 831 1 0; }
.list { flex: 1074 1 0; }
.panehead { flex: none; display: flex; align-items: center; height: 18px; margin-bottom: 2px; border: 1px solid #3f5663; border-width: 1px 0 1px 0; background: #6e8897; }
.list .panehead { padding-left: 3px; border-left-width: 1px; }
.panehead.active { padding-right: 1px; background: #0e2736; border-color: #0e2736; color: #fff; }
.panehead button { width: 13px; }
.panehead svg { width: 10px; height: 12px; }

.treewrap { flex: 1; min-height: 0; display: flex; background: #fff; }
.treeclip { flex: 1; min-width: 0; overflow: hidden; }
.tree, .jobs { width: 100%; table-layout: fixed; border-collapse: separate; border-spacing: 0; }
.c-rate { width: 90px; }
.c-ico { width: 30px; }
.tree th, .jobs th { height: 19px; padding: 2px 0 0; background: #7890a0; border-top: 1px solid #4a626f; border-bottom: 1px solid #5d7683; border-right: 1px solid #4f6775; box-shadow: inset 1px 0 #a7bdca; white-space: nowrap; }
.tree th { padding-top: 1px; }
.tree th .i16 { margin: 0 auto; }
.tree td { height: 19px; padding: 0; }
.node { display: flex; align-items: center; height: 19px; }
.guide { flex: none; width: 19px; height: 19px; }
.guide.line { background: repeating-linear-gradient(#8b8b8b 0 1px, transparent 1px 2px) 6px 0 / 1px 100% no-repeat; }
.slot {
  flex: none; display: flex; align-items: center; width: 17px; height: 19px; padding-left: 1px;
  background:
    repeating-linear-gradient(#8b8b8b 0 1px, transparent 1px 2px) 6px 0 / 1px 19px no-repeat,
    repeating-linear-gradient(90deg, #8b8b8b 0 1px, transparent 1px 2px) 6px 9px / 11px 1px no-repeat;
}
.slot.last { background-size: 1px 10px, 11px 1px; }
.exp { flex: none; display: block; width: 11px; height: 11px; border: 1px solid #7288ab; border-radius: 1px; border-right-color: #40567e; border-bottom-color: #40567e; background: linear-gradient(135deg, #fff, #b9c9e6); }
.exp svg { width: 9px; height: 9px; }
.label { flex: 1; height: 19px; margin-left: 1px; padding-left: 2px; line-height: 20px; white-space: nowrap; }
.label.selected { background: #3399ff; outline: 1px dotted #b2773f; outline-offset: -1px; color: #fff; }
.stars { display: flex; padding-left: 5px; }
.faint { opacity: .35; }
.scroll { flex: none; width: 17px; display: flex; flex-direction: column; background: #f0f0f0; }
.scroll button { display: flex; align-items: center; justify-content: center; height: 17px; }
.scroll .thumb { height: 67px; margin-top: 40px; margin-bottom: auto; background: #cdcdcd; }

.tools { flex: none; display: flex; align-items: flex-start; gap: 5px; height: 29px; padding-top: 4px; background: linear-gradient(#a6c0cf, #8ba3b1 50%, #6d8794); }
.group { display: flex; }
.tools button { display: flex; justify-content: center; width: 25px; }
.folders .group:first-child { margin-left: -4px; }
.imdb { width: 17px; height: 16px; border-radius: 1px; background: #dcb725; color: #16140a; font: bold 7px/16px "Liberation Sans Narrow", "DejaVu Sans Condensed", sans-serif; text-align: center; }

.tabs { flex: none; display: flex; height: 24px; padding: 2px 0 0 6px; background: linear-gradient(#9ab1bf, #5e7886 90%, #253d4b 91%, #253d4b 95%, #8ca3b0 96%); }
.tabs button { height: 20px; padding: 2px 3px 0 4px; background: #7890a0; }
.tabs .on { border: 1px solid #253d4b; border-bottom: 0; background: #8aa2b0; height: 21px; padding: 1px 4px 0; }
.cards { flex: 1; min-height: 0; overflow: hidden; background: #fff; }
.cardrow { display: flex; gap: 13px; margin: 0 2px 0 7px; padding: 10px 3px; border-bottom: 2px solid #57676f; }
.card { flex: none; width: 181px; }
.thumbnail { display: flex; justify-content: center; height: 119px; padding-top: 6px; border: 1px solid #000; background: #fff; }
.card.on .thumbnail { background: #b9dcff; }
.card footer { display: flex; align-items: center; height: 19px; padding: 0 1px 0 3px; background: #bdd6e4; }
.card footer span { flex: 1; min-width: 0; height: 19px; margin-left: 4px; overflow: hidden; line-height: 20px; white-space: pre; text-align: center; }
.pager { flex: none; display: flex; height: 19px; background: #efefef; }
.pager button { display: flex; align-items: center; justify-content: center; width: 17px; background: linear-gradient(#a5bfce, #6d8794); border-left: 1px solid #c0d1db; }
.pager button:disabled { background: #88a2b1; border: 0; }
.pager span { width: 40px; background: #fff; text-align: center; line-height: 20px; }

.transcode { flex: 281 1 0; min-height: 0; display: flex; flex-direction: column; }
.empty { flex: 1; background: #fff; }
.bottomtabs { flex: none; display: flex; align-items: flex-start; height: 27px; padding-left: 2px; border-top: 2px solid #2f4857; background: linear-gradient(#a8c2d1, #6d8794 94%, #c0d3de 95%); }
.bottomtabs button { height: 19px; padding: 2px 4px 0; border-right: 1px solid #c9dbe5; }
.bottomtabs .on { padding: 2px 3px 0; border: 1px solid #2f4857; border-top: 0; background: #8ba4b3; }
.bottomtabs button:last-child { border: 0; }

.status { flex: none; display: flex; gap: 2px; height: 14px; background: #6d8794; }
.swatches { display: flex; gap: 1px; }
.cell { flex: none; display: flex; justify-content: center; height: 20px; padding-top: 2px; border: 1px solid #5a7280; background: linear-gradient(#a5becd, #839ba9); }
.cell.fill { flex: 1; }
.cell.ico { width: 22px; }
.cell.pair { width: 38px; gap: 4px; }
.cell.num { width: 102px; }
.cell.user { width: 42px; gap: 4px; }
.cell.small { width: 32px; }
.cell.version { width: 165px; }
.cell i { width: 14px; height: 15px; margin-top: 1px; border: 1px solid #5a7280; }
.grey { background: #7f98a8; }
.black { background: #000; }
.white { background: #fff; }
.pale { background: #bdd6e4; }
</style>
